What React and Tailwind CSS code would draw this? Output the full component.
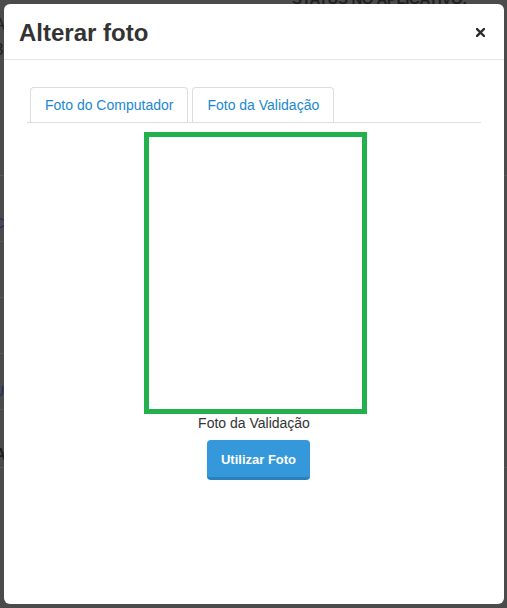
import React, { useState } from "react";

const tabs = ["Foto do Computador", "Foto da Validação"];

// faint rows of the page that sits behind the backdrop
const backRows = [
  { h: "h-[66px]", letter: "C", cls: "pt-[40px] text-[14px] text-[#1c2a6b]" },
  { h: "h-[56px]" },
  { h: "h-[56px]" },
  { h: "h-[56px]", letter: "U", cls: "pt-[30px] text-[14px] text-[#1c2a6b]" },
  { h: "h-[58px]", letter: "A", cls: "pt-[36px] text-[17px] font-bold" },
];

const App = () => {
  const [active, setActive] = useState(1);

  return (
    <div
      className="relative w-[507px] h-[608px] overflow-hidden bg-[#4b4b4b]"
      style={{ fontFamily: '"Liberation Sans", Arial, sans-serif' }}
    >
      {/* page behind the backdrop */}
      <div className="absolute inset-0 flex flex-col text-[#1f1f1f]">
        <div className="h-[176px] flex justify-between border-b border-[#585858]">
          <div className="flex flex-col -ml-[6px] pt-[12px] text-[17px] leading-[25px]">
            <span>A</span>
            <span>3</span>
          </div>
          <div className="-mt-[9px] mr-[40px] text-[15px] leading-[16px] font-bold tracking-tight">
            STATUS NO APLICATIVO:
          </div>
        </div>
        {backRows.map((row, idx) => (
          <div
            key={idx}
            className={`${row.h} w-[10px] flex border-b border-[#585858] ${
              idx === backRows.length - 1 ? "w-full" : ""
            }`}
          >
            {row.letter && (
              <span className={`-ml-[6px] leading-none ${row.cls}`}>
                {row.letter}
              </span>
            )}
          </div>
        ))}
      </div>

      {/* modal */}
      <div className="absolute left-[4px] top-[4px] w-[500px] h-[600px] bg-white rounded-[6px] flex flex-col">
        <div className="flex items-center justify-between pl-[15px] pr-[19px] h-[56px] border-b border-[#e5e5e5]">
          <h4 className="text-[24px] font-bold text-[#333] leading-none mt-[3px]">
            Alterar foto
          </h4>
          <button type="button" className="w-[9px] h-[9px] mt-[2px]">
            <svg viewBox="0 0 9 9" className="w-[9px] h-[9px]">
              <path
                d="M1 1 L8 8 M8 1 L1 8"
                stroke="#2b2b2b"
                strokeWidth="2.4"
                strokeLinecap="square"
              />
            </svg>
          </button>
        </div>

        <div className="px-[23px] pt-[27px] flex flex-col">
          <ul className="flex gap-[4px] pl-[3px] border-b border-[#dddddd]">
            {tabs.map((tab, idx) => (
              <li
                key={tab}
                onClick={() => setActive(idx)}
                className={`h-[35px] flex items-center px-[14px] border border-b-0 border-[#dddddd] rounded-t-[4px] text-[14px] text-[#1b88d0] cursor-pointer ${
                  idx === active ? "bg-white" : "bg-white"
                }`}
              >
                {tab}
              </li>
            ))}
          </ul>

          <div className="flex flex-col items-center pt-[9px]">
            <div className="w-[223px] h-[282px] border-[5px] border-[#22b14c] ml-[2px]" />
            <p className="text-[14px] text-[#333] leading-[20px] mt-[-1px]">
              Foto da Validação
            </p>
            <button
              type="button"
              className="mt-[7px] ml-[9px] w-[103px] h-[40px] rounded-[4px] bg-[#3498db] border-b-[3px] border-[#2a80b9] text-white text-[13px] font-bold pt-[2px]"
            >
              Utilizar Foto
            </button>
          </div>
        </div>
      </div>
    </div>
  );
};

export default App;
